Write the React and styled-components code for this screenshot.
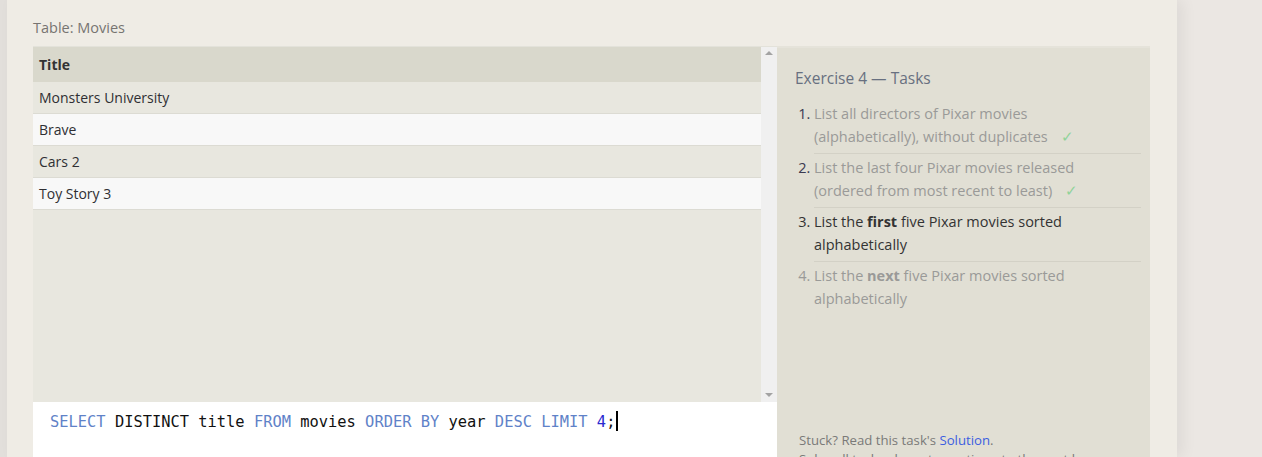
import React from "react";
import styled, { createGlobalStyle } from "styled-components";

const Global = createGlobalStyle`
  html, body { margin: 0; padding: 0; }
  body {
    background: #ebe7e3;
    font-family: "Open Sans", "Noto Sans", Arial, sans-serif;
    overflow: hidden;
  }
`;

const Page = styled.div`
  display: flex;
  height: 457px;
  background: linear-gradient(to right, #e2dfdb 0 7px, #ebe7e3 7px);
  padding-left: 7px;
  box-sizing: border-box;
`;

const Panel = styled.div`
  width: 1170px;
  background: #efece5;
  box-shadow: 6px 0 14px rgba(0, 0, 0, 0.06);
  padding: 18px 27px 0 26px;
  box-sizing: border-box;
`;

const Caption = styled.div`
  font-size: 14.5px;
  color: #777471;
  line-height: 20px;
  height: 28px;
`;

const Content = styled.div`
  display: flex;
`;

const LeftCol = styled.div`
  width: 744px;
  display: flex;
  flex-direction: column;
`;

const TableArea = styled.div`
  display: flex;
  height: 356px;
  background: #e8e7df;
  border-top: 1px solid #e3e2da;
  box-sizing: border-box;
`;

const Table = styled.div`
  flex: 1;
`;

const HeaderRow = styled.div`
  height: 35px;
  background: #d9d8cc;
  display: flex;
  align-items: center;
  padding-left: 6px;
  font-weight: 700;
  font-size: 14px;
  color: #333;
`;

const Row = styled.div`
  height: 31px;
  display: flex;
  align-items: center;
  padding-left: 6px;
  font-size: 14px;
  color: #2f2f33;
  background: ${(p) => (p.$alt ? "#f8f8f8" : "#e8e7df")};
  border-bottom: 1px solid #dcdbd3;
`;

const Scrollbar = styled.div`
  width: 16px;
  background: #f0f0f0;
  display: flex;
  flex-direction: column;
  justify-content: space-between;
  align-items: center;
  padding: 4px 0 5px;
  box-sizing: border-box;
`;

const Arrow = styled.div`
  width: 0;
  height: 0;
  border-left: 4px solid transparent;
  border-right: 4px solid transparent;
  ${(p) =>
    p.$up
      ? "border-bottom: 4px solid #a3a3a3;"
      : "border-top: 4px solid #a3a3a3;"}
`;

const Editor = styled.div`
  background: #ffffff;
  height: 60px;
  padding: 9px 0 0 17px;
  box-sizing: border-box;
  font-family: "DejaVu Sans Mono", "Liberation Mono", monospace;
  font-size: 15.4px;
  line-height: 22px;
  color: #111;
  white-space: pre;
`;

const Kw = styled.span`
  color: #5f82c8;
`;

const Num = styled.span`
  color: #2a2ad0;
`;

const Caret = styled.span`
  display: inline-block;
  width: 2px;
  height: 20px;
  background: #000;
  vertical-align: -4px;
  margin-left: 1px;
`;

const TaskPanel = styled.div`
  width: 373px;
  height: 420px;
  background: #e1dfd4;
  border-top: 2px solid #e5e3da;
  box-sizing: border-box;
  padding: 19px 9px 0 18px;
  display: flex;
  flex-direction: column;
`;

const TaskTitle = styled.div`
  font-size: 15.5px;
  color: #687080;
  line-height: 22px;
  margin-bottom: 11px;
`;

const TaskList = styled.ol`
  margin: 0;
  padding: 0 0 0 19px;
  font-size: 14.5px;
  line-height: 22.5px;
`;

const TaskItem = styled.li`
  color: ${(p) => (p.$active ? "#333" : "#9a9a98")};
  padding: 3px 30px 5px 0;
  border-bottom: ${(p) => (p.$last ? "none" : "1px solid #d3d1c6")};
  &::marker {
    color: ${(p) => (p.$done ? "#3a3a50" : p.$active ? "#333" : "#9a9a98")};
  }
  b {
    font-weight: 700;
  }
`;

const Check = styled.span`
  color: #90d39a;
  margin-left: 13px;
`;

const Spacer = styled.div`
  flex: 1;
`;

const Help = styled.div`
  font-size: 13.2px;
  line-height: 19px;
  color: #7a7a78;
  padding-left: 4px;
  margin-bottom: -3px;
  white-space: nowrap;
  a {
    color: #3c5ee0;
    text-decoration: none;
  }
`;

const rows = ["Monsters University", "Brave", "Cars 2", "Toy Story 3"];

export default function App() {
  return (
    <>
      <Global />
      <Page>
        <Panel>
          <Caption>Table: Movies</Caption>
          <Content>
            <LeftCol>
              <TableArea>
                <Table>
                  <HeaderRow>Title</HeaderRow>
                  {rows.map((r, i) => (
                    <Row key={r} $alt={i % 2 === 1}>
                      {r}
                    </Row>
                  ))}
                </Table>
                <Scrollbar>
                  <Arrow $up />
                  <Arrow />
                </Scrollbar>
              </TableArea>
              <Editor>
                <Kw>SELECT</Kw> DISTINCT title <Kw>FROM</Kw> movies{" "}
                <Kw>ORDER BY</Kw> year <Kw>DESC</Kw> <Kw>LIMIT</Kw>{" "}
                <Num>4</Num>;<Caret />
              </Editor>
            </LeftCol>
            <TaskPanel>
              <TaskTitle>Exercise 4 — Tasks</TaskTitle>
              <TaskList>
                <TaskItem $done>
                  List all directors of Pixar movies (alphabetically), without
                  duplicates<Check>✓</Check>
                </TaskItem>
                <TaskItem $done>
                  List the last four Pixar movies released (ordered from most
                  recent to least)<Check>✓</Check>
                </TaskItem>
                <TaskItem $active>
                  List the <b>first</b> five Pixar movies sorted alphabetically
                </TaskItem>
                <TaskItem $last>
                  List the <b>next</b> five Pixar movies sorted alphabetically
                </TaskItem>
              </TaskList>
              <Spacer />
              <Help>
                Stuck? Read this task's <a href="#">Solution</a>.
                <br />
                Solve all tasks above to continue to the next lesson.
              </Help>
            </TaskPanel>
          </Content>
        </Panel>
      </Page>
    </>
  );
}
